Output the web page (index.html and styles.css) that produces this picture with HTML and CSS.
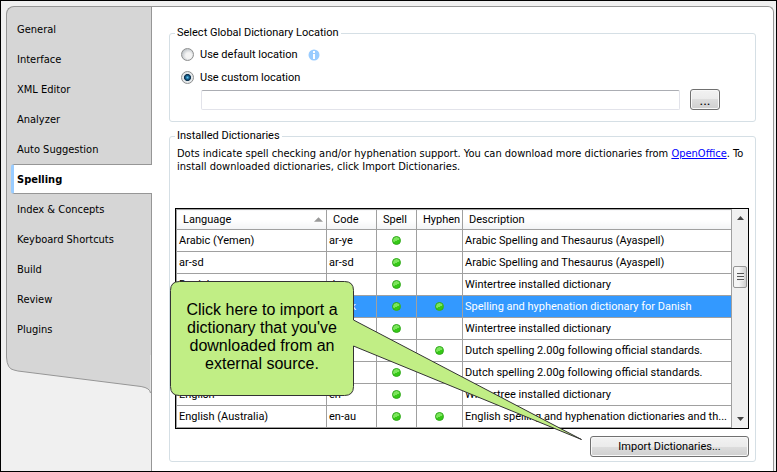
FILE: index.html
```html
<!DOCTYPE html>
<html lang="en">
<head>
<meta charset="utf-8">
<title>Options - Spelling</title>
<link rel="stylesheet" href="styles.css">
</head>
<body>
<div class="window">
  <div class="panel">
    <nav class="sidebar">
      <div class="tabs">
        <a class="tab" href="#general">General</a>
        <a class="tab" href="#interface">Interface</a>
        <a class="tab" href="#xml">XML Editor</a>
        <a class="tab" href="#analyzer">Analyzer</a>
        <a class="tab" href="#auto">Auto Suggestion</a>
        <a class="tab tab-active" href="#spelling" aria-current="page">Spelling</a>
        <a class="tab" href="#index">Index &amp; Concepts</a>
        <a class="tab" href="#keyboard">Keyboard Shortcuts</a>
        <a class="tab" href="#build">Build</a>
        <a class="tab" href="#review">Review</a>
        <a class="tab" href="#plugins">Plugins</a>
      </div>
      <svg class="sidebar-foot" viewBox="0 0 146 40" preserveAspectRatio="none" aria-hidden="true">
        <path d="M.5 0V2Q1 14 8 15L12 16L136 31.500Q145 33 145.500 38V0Z" fill="#d6d6d6"/>
        <path d="M.5 0V2Q1 14 8 15L12 16L136 31.500Q145 33 145.500 38" fill="none" stroke="#969696"/>
      </svg>
    </nav>
    <main class="content">
      <fieldset class="group location">
        <legend>Select Global Dictionary Location</legend>
        <div class="option">
          <input type="radio" name="location" id="loc-default">
          <label for="loc-default">Use default location</label>
          <svg class="info" viewBox="0 0 12 12" aria-hidden="true">
            <circle cx="6" cy="6" r="5.500" fill="#99ccff"/>
            <path d="M5 2h2v2H5zM5 5h2v5H5z" fill="#fff"/>
          </svg>
        </div>
        <div class="option">
          <input type="radio" name="location" id="loc-custom" checked>
          <label for="loc-custom">Use custom location</label>
        </div>
        <div class="path">
          <input type="text" class="path-field" aria-label="Custom location">
          <button type="button" class="button browse">...</button>
        </div>
      </fieldset>
      <fieldset class="group installed">
        <legend>Installed Dictionaries</legend>
        <p class="hint">Dots indicate spell checking and/or hyphenation support. You can download more dictionaries from <a href="#openoffice">OpenOffice</a>. To install downloaded dictionaries, click Import Dictionaries.</p>
        <div class="grid">
          <table>
            <colgroup><col class="c-lang"><col class="c-code"><col class="c-spell"><col class="c-hyphen"><col></colgroup>
            <thead>
              <tr><th><span class="sorted">Language<svg class="sort" viewBox="0 0 10 5" aria-hidden="true"><path d="M0 5L5 0L10 5Z" fill="#999"/></svg></span></th><th>Code</th><th>Spell</th><th>Hyphen</th><th>Description</th></tr>
            </thead>
            <tbody>
              <tr><td>Arabic (Yemen)</td><td>ar-ye</td><td><i class="dot"></i></td><td></td><td>Arabic Spelling and Thesaurus (Ayaspell)</td></tr>
              <tr><td>ar-sd</td><td>ar-sd</td><td><i class="dot"></i></td><td></td><td>Arabic Spelling and Thesaurus (Ayaspell)</td></tr>
              <tr><td>Danish</td><td>da</td><td><i class="dot"></i></td><td></td><td>Wintertree installed dictionary</td></tr>
              <tr class="selected"><td>Danish</td><td>da-dk</td><td><i class="dot"></i></td><td><i class="dot"></i></td><td>Spelling and hyphenation dictionary for Danish</td></tr>
              <tr><td>Dutch</td><td>nl</td><td><i class="dot"></i></td><td></td><td>Wintertree installed dictionary</td></tr>
              <tr><td>Dutch</td><td>nl</td><td></td><td><i class="dot"></i></td><td>Dutch spelling 2.00g following official standards.</td></tr>
              <tr><td>Dutch</td><td>nl</td><td><i class="dot"></i></td><td></td><td>Dutch spelling 2.00g following official standards.</td></tr>
              <tr><td>English</td><td>en</td><td><i class="dot"></i></td><td></td><td>Wintertree installed dictionary</td></tr>
              <tr><td>English (Australia)</td><td>en-au</td><td><i class="dot"></i></td><td><i class="dot"></i></td><td>English spelling and hyphenation dictionaries and th...</td></tr>
            </tbody>
          </table>
          <div class="scrollbar" aria-hidden="true">
            <svg viewBox="0 0 7 4" class="arrow"><path d="M0 4L3.500 0L7 4Z" fill="#444"/></svg>
            <div class="thumb"></div>
            <svg viewBox="0 0 7 4" class="arrow"><path d="M0 0L3.500 4L7 0Z" fill="#444"/></svg>
          </div>
        </div>
        <div class="actions">
          <button type="button" class="button import">Import Dictionaries...</button>
        </div>
        <div class="callout">
          <svg class="bubble" viewBox="0 0 414 162" aria-hidden="true">
            <path d="M10.500 1.500H175.500Q184.500 1.500 184.500 10.500V40L412.500 159.500L184.500 66V106.500Q184.500 115.500 175.500 115.500H10.500Q1.500 115.500 1.500 106.500V10.500Q1.500 1.500 10.500 1.500Z" fill="#c1ee85" stroke="#333"/>
          </svg>
          <p class="callout-text">Click here to import a<br>dictionary that you've<br>downloaded from an<br>external source.</p>
        </div>
      </fieldset>
    </main>
  </div>
</div>
</body>
</html>
```
FILE: styles.css
```css
* { box-sizing: border-box; }

body {
  margin: 0;
  font: 11px/14px Roboto, "Liberation Sans", sans-serif;
  color: #000;
}

button, input { font: inherit; color: inherit; }

.window {
  display: flex;
  min-height: 100vh;
  padding: 5px 2px 0 5px;
  border: 1px solid #000;
  background: #f0f0f0;
}

.panel { display: flex; flex: 1; min-width: 0; }

.sidebar {
  display: flex;
  flex-direction: column;
  flex: none;
  width: 145px;
}

.tabs, .hint { font-family: "DejaVu Sans Condensed", "DejaVu Sans", sans-serif; }

.tabs {
  padding: 7px 0 11px 4px;
  border: 1px solid #969696;
  border-width: 1px 0 0 1px;
  border-top-left-radius: 8px;
  background: #d6d6d6;
}

.tab {
  display: block;
  height: 30px;
  padding-left: 6px;
  line-height: 32px;
  color: #000;
  text-decoration: none;
}

.tab-active {
  position: relative;
  margin-right: -1px;
  padding-left: 3px;
  border: 1px solid #969696;
  border-width: 1px 0;
  border-left: 3px solid #99ccff;
  border-radius: 3px 0 0 3px;
  background: #fff;
  line-height: 30px;
  font-weight: bold;
}

.sidebar-foot { display: block; width: 100%; height: 40px; }

.content {
  flex: 1;
  min-width: 0;
  padding: 19px 17px 8px;
  border: 1px solid #969696;
  border-bottom: 0;
  border-top-right-radius: 6px;
  background: #fff;
}

.group {
  min-width: 0;
  margin: 0;
  border: 1px solid #d5dfe5;
  border-radius: 3px;
}

.group legend { padding: 0 2px; }

.location { padding: 3px 35px 11px 5px; }

.option { display: flex; align-items: center; height: 23px; padding-left: 6px; }

.option label { margin-left: 6px; }

.option input {
  appearance: none;
  width: 13px;
  height: 13px;
  margin: 0;
  border: 1px solid #8e8f8f;
  border-radius: 50%;
  background: radial-gradient(circle at 60% 60%, #f4f4f4 30%, #c4c9cd 70%);
}

.option input:checked {
  background: radial-gradient(circle, #5cc4ee 0, #155a87 25%, #0b2e4a 40%, #e4e8ea 50%);
}

.info { width: 12px; height: 12px; margin-left: 10px; }

.path { display: flex; align-items: center; gap: 10px; padding-left: 26px; }

.path-field {
  flex: 1;
  min-width: 0;
  height: 20px;
  border: 1px solid #e2e3ea;
  border-top-color: #abadb3;
  border-radius: 2px;
}

.button {
  padding: 0;
  border: 1px solid #707070;
  border-radius: 3px;
  background: linear-gradient(#f2f2f2, #ebebeb 50%, #dddddd 50%, #cfcfcf);
  box-shadow: inset 0 0 0 1px #f8f8f8;
}

.browse { width: 30px; height: 21px; font-size: 14px; }

.installed {
  position: relative;
  margin-top: 7px;
  padding: 4px 6px 4px 5px;
}

.hint { margin: 0 2px; line-height: 13px; }

.hint a { color: #00f; }

.grid {
  display: flex;
  margin-top: 35px;
  border: 1px solid #000;
}

table {
  flex: 1;
  width: 0;
  table-layout: fixed;
  border-collapse: collapse;
}

.c-lang { width: 150px; }
.c-code { width: 50px; }
.c-spell { width: 40px; }
.c-hyphen { width: 46px; }

th, td {
  height: 22px;
  padding: 0 0 0 2px;
  border: 1px solid #a0a0a0;
  overflow: hidden;
  font-weight: normal;
  text-align: left;
  text-overflow: ellipsis;
  white-space: nowrap;
}

th {
  height: 20px;
  padding-left: 6px;
  background: linear-gradient(#fff 50%, #f2f3f5);
  text-overflow: clip;
}

td:nth-child(3), td:nth-child(4) { padding: 0; text-align: center; }

.sorted { display: flex; align-items: center; justify-content: space-between; padding-right: 3px; }
.sort { width: 9px; height: 5px; }

.selected td { background: #3399ff; color: #fff; }

.dot {
  display: inline-block;
  width: 9px;
  height: 9px;
  border: 1px solid #31a81c;
  border-radius: 50%;
  background: linear-gradient(155deg, #7ce65c 50%, #35c916 55%);
  vertical-align: middle;
}

.scrollbar {
  display: flex;
  flex-direction: column;
  align-items: center;
  width: 16px;
  padding: 7px 0;
  background: #f0f0f0;
}

.arrow { width: 7px; height: 4px; }

.thumb {
  width: 14px;
  height: 22px;
  margin: 46px 0 auto;
  border: 1px solid #969696;
  border-radius: 2px;
  background:
    repeating-linear-gradient(#555 0 1px, #eee 1px 3px) center / 7px 8px no-repeat,
    linear-gradient(90deg, #f5f5f5 40%, #cfcfcf);
}

.actions { display: flex; justify-content: flex-end; margin-top: 7px; }

.import { width: 159px; height: 21px; }

.callout {
  position: absolute;
  top: 137px;
  left: -1px;
  width: 414px;
  height: 162px;
  pointer-events: none;
}

.bubble { position: absolute; inset: 0; width: 100%; height: 100%; }

.callout-text {
  position: relative;
  width: 186px;
  margin: 0;
  padding-top: 21px;
  font: 16px/18px "Liberation Sans", Arial, sans-serif;
  text-align: center;
}
```
